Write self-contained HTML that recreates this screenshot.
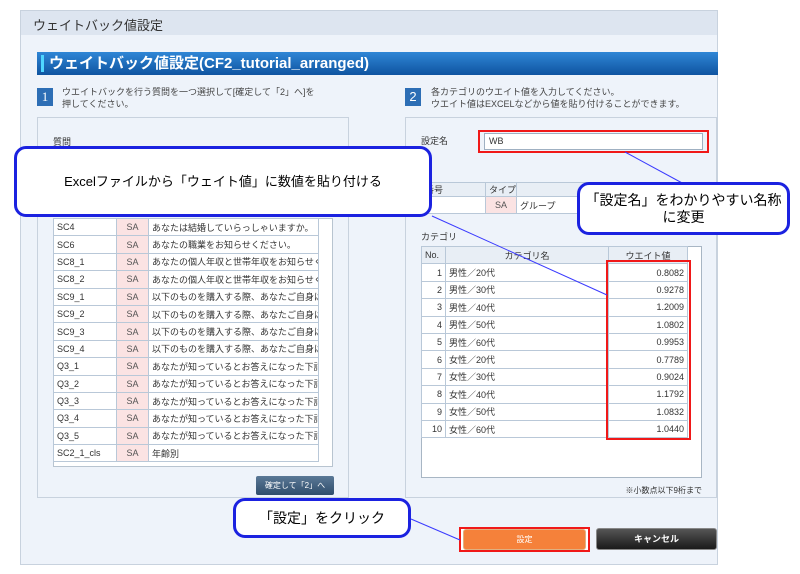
<!DOCTYPE html>
<html><head><meta charset="utf-8"><style>
*{box-sizing:border-box;margin:0;padding:0}
body{width:800px;height:574px;background:#fff;position:relative;overflow:hidden;font-family:"Liberation Sans","Noto Sans CJK JP",sans-serif;color:#333}
.a{position:absolute}
table{border-collapse:collapse;table-layout:fixed}
td{border:1px solid #b9c8d8;font-size:9px;height:17.4px;padding:0 3px;white-space:nowrap;overflow:hidden;background:#fff;color:#333}
.sa{background:#fbe3e3;text-align:center;color:#555}
.call{position:absolute;border:3px solid #1b22e0;border-radius:12px;background:#fff;font-size:13px;color:#000;display:flex;align-items:center;justify-content:center;text-align:center;line-height:17px}
</style></head><body>
<div class="a" style="left:20px;top:10px;width:698px;height:555px;background:#eef3fa;border:1px solid #c8d2de"></div>
<div class="a" style="left:21px;top:11px;width:696px;height:24px;background:#dde5f0;font-size:13px;padding:4px 12px;color:#333">ウェイトバック値設定</div>
<div class="a" style="left:37px;top:52px;width:681px;height:23px;background:linear-gradient(#2f86d6,#0f54a0);color:#fff;font-weight:bold;font-size:15px;padding:2px 12px;line-height:19px">ウェイトバック値設定(CF2_tutorial_arranged)</div>
<div class="a" style="left:41px;top:55px;width:3px;height:17px;background:#4fd6ff"></div>
<div class="a" style="left:37px;top:88px;width:16px;height:18px;background:#2d6eb5;color:#fff;font-family:'Liberation Serif',serif;font-size:13px;text-align:center;line-height:18px">1</div>
<div class="a" style="left:62px;top:86px;font-size:9px;line-height:12px;color:#444">ウエイトバックを行う質問を一つ選択して[確定して「2」へ]を<br>押してください。</div>
<div class="a" style="left:405px;top:88px;width:16px;height:18px;background:#2d6eb5;color:#fff;font-size:13px;text-align:center;line-height:18px">2</div>
<div class="a" style="left:431px;top:86px;font-size:9px;line-height:12px;color:#444">各カテゴリのウエイト値を入力してください。<br>ウエイト値はEXCELなどから値を貼り付けることができます。</div>
<!-- left panel -->
<div class="a" style="left:37px;top:117px;width:312px;height:381px;border:1px solid #c8d2de;background:#eef3fa"></div>
<div class="a" style="left:53px;top:135px;font-size:9px">質問</div>
<div class="a" style="left:53px;top:218px;width:280px;height:249px;border:1px solid #b8c4d0;background:#fff"></div>
<table class="a" style="left:53px;top:218px;width:266px">
<colgroup><col style="width:63px"><col style="width:32px"><col></colgroup>
<tr><td>SC4</td><td class="sa">SA</td><td>あなたは結婚していらっしゃいますか。</td></tr>
<tr><td>SC6</td><td class="sa">SA</td><td>あなたの職業をお知らせください。</td></tr>
<tr><td>SC8_1</td><td class="sa">SA</td><td>あなたの個人年収と世帯年収をお知らせください</td></tr>
<tr><td>SC8_2</td><td class="sa">SA</td><td>あなたの個人年収と世帯年収をお知らせください</td></tr>
<tr><td>SC9_1</td><td class="sa">SA</td><td>以下のものを購入する際、あなたご自身は</td></tr>
<tr><td>SC9_2</td><td class="sa">SA</td><td>以下のものを購入する際、あなたご自身は</td></tr>
<tr><td>SC9_3</td><td class="sa">SA</td><td>以下のものを購入する際、あなたご自身は</td></tr>
<tr><td>SC9_4</td><td class="sa">SA</td><td>以下のものを購入する際、あなたご自身は</td></tr>
<tr><td>Q3_1</td><td class="sa">SA</td><td>あなたが知っているとお答えになった下記</td></tr>
<tr><td>Q3_2</td><td class="sa">SA</td><td>あなたが知っているとお答えになった下記</td></tr>
<tr><td>Q3_3</td><td class="sa">SA</td><td>あなたが知っているとお答えになった下記</td></tr>
<tr><td>Q3_4</td><td class="sa">SA</td><td>あなたが知っているとお答えになった下記</td></tr>
<tr><td>Q3_5</td><td class="sa">SA</td><td>あなたが知っているとお答えになった下記</td></tr>
<tr><td>SC2_1_cls</td><td class="sa">SA</td><td>年齢別</td></tr>
</table>
<div class="a" style="left:256px;top:476px;width:78px;height:19px;background:linear-gradient(#5a7896,#2f4d6b);border-radius:2px;color:#fff;font-size:8px;text-align:center;line-height:19px">確定して「2」へ</div>
<!-- right panel -->
<div class="a" style="left:405px;top:117px;width:312px;height:381px;border:1px solid #c8d2de;background:#eef3fa"></div>
<div class="a" style="left:421px;top:134px;font-size:9px">設定名</div>
<div class="a" style="left:478px;top:130px;width:231px;height:23px;border:2px solid #f01818"></div>
<div class="a" style="left:484px;top:133px;width:219px;height:17px;border:1px solid #9fb0c2;background:#fff;font-size:9px;padding:2px 4px">WB</div>
<table class="a" style="left:421px;top:182px;width:281px">
<colgroup><col style="width:64px"><col style="width:31px"><col></colgroup>
<tr><td style="background:#e8eef5;height:14px">番号</td><td style="background:#e8eef5;height:14px">タイプ</td><td style="background:#e8eef5;height:14px"></td></tr>
<tr><td></td><td class="sa">SA</td><td>グループ</td></tr>
</table>
<div class="a" style="left:421px;top:230px;font-size:9px">カテゴリ</div>
<div class="a" style="left:421px;top:246px;width:281px;height:232px;border:1px solid #a8b6c4;background:#fff"></div>
<table class="a" style="left:421px;top:246px;width:267px">
<colgroup><col style="width:24px"><col style="width:163px"><col></colgroup>
<tr><td style="background:#e8eef5;height:17px">No.</td><td style="background:#e8eef5;text-align:center">カテゴリ名</td><td style="background:#e8eef5;text-align:center">ウエイト値</td></tr>
<tr><td style="text-align:right">1</td><td>男性／20代</td><td style="text-align:right">0.8082</td></tr>
<tr><td style="text-align:right">2</td><td>男性／30代</td><td style="text-align:right">0.9278</td></tr>
<tr><td style="text-align:right">3</td><td>男性／40代</td><td style="text-align:right">1.2009</td></tr>
<tr><td style="text-align:right">4</td><td>男性／50代</td><td style="text-align:right">1.0802</td></tr>
<tr><td style="text-align:right">5</td><td>男性／60代</td><td style="text-align:right">0.9953</td></tr>
<tr><td style="text-align:right">6</td><td>女性／20代</td><td style="text-align:right">0.7789</td></tr>
<tr><td style="text-align:right">7</td><td>女性／30代</td><td style="text-align:right">0.9024</td></tr>
<tr><td style="text-align:right">8</td><td>女性／40代</td><td style="text-align:right">1.1792</td></tr>
<tr><td style="text-align:right">9</td><td>女性／50代</td><td style="text-align:right">1.0832</td></tr>
<tr><td style="text-align:right">10</td><td>女性／60代</td><td style="text-align:right">1.0440</td></tr>
</table>
<div class="a" style="left:606px;top:260px;width:85px;height:180px;border:2px solid #f01818"></div>
<div class="a" style="left:610px;top:485px;width:92px;font-size:8px;text-align:right">※小数点以下9桁まで</div>
<!-- buttons -->
<div class="a" style="left:459px;top:527px;width:131px;height:25px;border:2px solid #f01818;background:#fff"></div>
<div class="a" style="left:463px;top:529px;width:123px;height:21px;background:#f5813a;border:1px solid #e0b080;border-radius:3px;color:#fff;font-size:8px;text-align:center;line-height:19px">設定</div>
<div class="a" style="left:596px;top:528px;width:121px;height:22px;background:linear-gradient(#555,#1a1a1a);border:1px solid #888;border-radius:3px;color:#fff;font-size:9px;font-weight:bold;text-align:center;line-height:20px">キャンセル</div>
<!-- lines -->
<svg class="a" style="left:0;top:0" width="800" height="574"><g stroke="#3a3aff" stroke-width="1"><line x1="625" y1="152" x2="684" y2="184"/><line x1="432" y1="216" x2="607" y2="295"/><line x1="411" y1="519" x2="460" y2="540"/></g></svg>
<!-- callouts -->
<div class="call" style="left:14px;top:146px;width:418px;height:71px">Excelファイルから「ウェイト値」に数値を貼り付ける</div>
<div class="call" style="left:577px;top:182px;width:213px;height:53px;font-size:14px">「設定名」をわかりやすい名称<br>に変更</div>
<div class="call" style="left:233px;top:498px;width:178px;height:40px;font-size:14px">「設定」をクリック</div>
</body></html>
